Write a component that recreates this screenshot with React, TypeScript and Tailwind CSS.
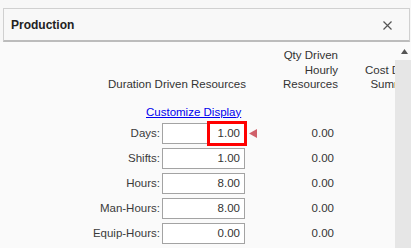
import React from "react";

const rows = [
  { label: "Days:", value: "1.00", highlight: true },
  { label: "Shifts:", value: "1.00" },
  { label: "Hours:", value: "8.00" },
  { label: "Man-Hours:", value: "8.00" },
  { label: "Equip-Hours:", value: "0.00" },
];

export default function App() {
  return (
    <div
      className="w-[411px] h-[248px] overflow-hidden bg-[#f7f7f7] text-[#333333]"
      style={{ fontFamily: '"Liberation Sans", Arial, sans-serif' }}
    >
      <div className="pt-[8px] pl-[3px] pr-[1px]">
        <div className="h-[34px] border border-[#d0d0d0] border-b-2 border-b-[#bcbcbc] bg-[#f8f8f8] flex items-center justify-between pl-[7px] pr-[17px]">
          <span className="text-[12px] font-bold text-[#222222]">Production</span>
          <svg width="9" height="9" viewBox="0 0 9 9" className="mt-[1px]">
            <path d="M0.5 0.5 L8.5 8.5 M8.5 0.5 L0.5 8.5" stroke="#555555" strokeWidth="1.2" fill="none" />
          </svg>
        </div>
      </div>
      <div className="flex h-[206px]">
        <div className="w-[395px] shrink-0 bg-[#fafafa] overflow-hidden text-[11.5px] leading-[14.5px]">
          <div className="flex items-end pt-[6px] whitespace-nowrap">
            <div className="w-[246px] shrink-0 text-right">Duration Driven Resources</div>
            <div className="w-[92px] shrink-0 text-right">
              Qty Driven
              <br />
              Hourly
              <br />
              Resources
            </div>
            <div className="ml-[22px] w-[70px] shrink-0 text-center">
              Cost Driven
              <br />
              Summary
            </div>
          </div>
          <div className="mt-[13px] pl-[146px]">
            <span className="text-[#0000ee] underline">Customize Display</span>
          </div>
          <div className="mt-[4px] flex flex-col gap-[4px]">
            {rows.map((r) => (
              <div key={r.label} className="flex items-center h-[21px]">
                <div className="w-[160px] shrink-0 text-right text-[#3a3a3a]">{r.label}</div>
                <div className="relative shrink-0 ml-[2px] w-[83px] h-[21px] border border-[#a3a3a3] bg-white text-right pr-[4px] leading-[19px]">
                  {r.value}
                  {r.highlight && (
                    <div className="absolute top-[-3px] bottom-[-3px] right-[-3px] left-[44px] border-[3px] border-[#ff0000]" />
                  )}
                </div>
                <div className="w-[12px] shrink-0 flex justify-end">
                  {r.highlight && (
                    <svg width="8" height="9" viewBox="0 0 8 9">
                      <path d="M0 4.5 L8 0 L8 9 Z" fill="#d0606a" />
                    </svg>
                  )}
                </div>
                <div className="w-[77px] shrink-0 text-right">0.00</div>
              </div>
            ))}
          </div>
        </div>
        <div className="w-[16px] shrink-0 flex flex-col bg-[#fafafa]">
          <div className="h-[18px] flex items-center justify-center pl-[2px]">
            <svg width="7" height="5" viewBox="0 0 7 5">
              <path d="M3.5 0 L7 5 L0 5 Z" fill="#555555" />
            </svg>
          </div>
          <div className="flex-1 bg-[#e6e6e6]" />
        </div>
      </div>
    </div>
  );
}
